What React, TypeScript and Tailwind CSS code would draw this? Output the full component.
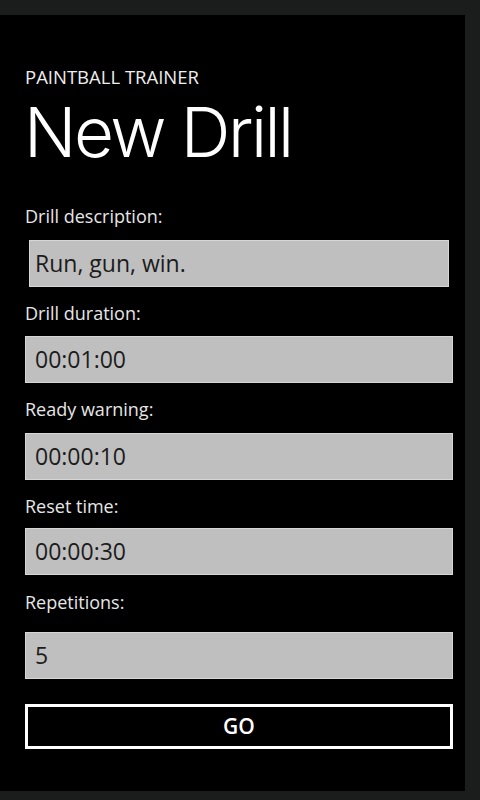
const FIELDS = [
  { label: 'Drill duration:', value: '00:01:00', mt: 'mt-[16px]', boxMt: 'mt-[13px]' },
  { label: 'Ready warning:', value: '00:00:10', mt: 'mt-[16px]', boxMt: 'mt-[14px]' },
  { label: 'Reset time:', value: '00:00:30', mt: 'mt-[16px]', boxMt: 'mt-[12px]' },
  { label: 'Repetitions:', value: '5', mt: 'mt-[17px]', boxMt: 'mt-[20px]' },
]

function Label({ text, className = '' }: { text: string; className?: string }) {
  return <div className={`text-[18px] leading-[20px] text-[#e6e6e6] ${className}`}>{text}</div>
}

function Field({ value, className = '' }: { value: string; className?: string }) {
  return (
    <div
      className={`h-[47px] flex items-center bg-[#bfbfbf] border border-[#d6d6d6] text-[23px] text-[#1c1c1c] ${className}`}
    >
      {value}
    </div>
  )
}

export default function App() {
  return (
    <div
      className="w-[480px] h-[800px] bg-[#1b1c1c] pt-[15px] pr-[15px] pb-[9px]"
      style={{ fontFamily: '"Open Sans", "Noto Sans", sans-serif' }}
    >
      <div className="h-full bg-black pt-[52px] pl-[25px] pr-[12px] flex flex-col">
        {/* page header */}
        <div className="text-[18.5px] leading-[20px] text-[#eeeeee]">PAINTBALL TRAINER</div>
        <div className="mt-[10px] -ml-[1px] font-['Inter',sans-serif] text-[69px] leading-[70px] font-light text-white tracking-[-2.5px]">
          New Drill
        </div>

        <Label text="Drill description:" className="mt-[39px]" />
        <Field value="Run, gun, win." className="mt-[14px] mx-[4px] h-[46px] pl-[5px]" />

        {FIELDS.map((f) => (
          <div key={f.label}>
            <Label text={f.label} className={f.mt} />
            <Field value={f.value} className={`${f.boxMt} pl-[9px]`} />
          </div>
        ))}

        <button className="mt-[25px] h-[45px] border-[3px] border-white text-white text-[21px] font-semibold flex items-center justify-center">
          GO
        </button>
      </div>
    </div>
  )
}
